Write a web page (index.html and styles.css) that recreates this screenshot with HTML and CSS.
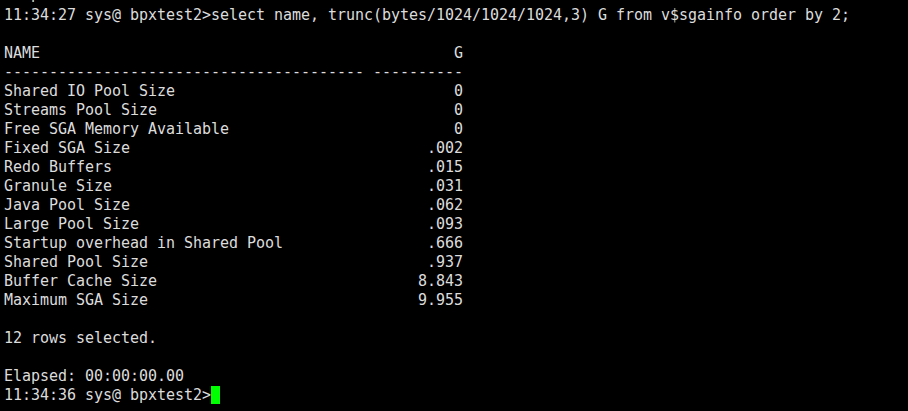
FILE: index.html
```html
<!DOCTYPE html>
<html>
<head>
<meta charset="utf-8">
<link rel="stylesheet" href="styles.css">
</head>
<body>
<div class="ghost"><pre class="ghost-line">Elapsed: 00:00:00.01</pre></div>
<pre class="term">11:34:27 sys@ bpxtest2>select name, trunc(bytes/1024/1024/1024,3) G from v$sgainfo order by 2;

NAME                                              G
---------------------------------------- ----------
Shared IO Pool Size                               0
Streams Pool Size                                 0
Free SGA Memory Available                         0
Fixed SGA Size                                 .002
Redo Buffers                                   .015
Granule Size                                   .031
Java Pool Size                                 .062
Large Pool Size                                .093
Startup overhead in Shared Pool                .666
Shared Pool Size                               .937
Buffer Cache Size                             8.843
Maximum SGA Size                              9.955

12 rows selected.

Elapsed: 00:00:00.00
11:34:36 sys@ bpxtest2><span class="cursor"></span></pre>
</body>
</html>
```
FILE: styles.css
```css
html, body {
  margin: 0;
  padding: 0;
  background: #000;
  height: 100%;
  overflow: hidden;
}
.ghost {
  height: 3px;
  overflow: hidden;
}
.ghost-line,
.term {
  padding: 0 0 0 4px;
  font-family: "DejaVu Sans Mono", monospace;
  font-size: 15px;
  line-height: 19px;
  color: #dcdcdc;
  letter-spacing: -0.03px;
  white-space: pre;
}
.ghost-line {
  margin: -15px 0 0 0;
}
.term {
  margin: 3px 0 0 0;
}
.cursor {
  display: inline-block;
  width: 9px;
  height: 18px;
  background: #00ff00;
  vertical-align: -4px;
}
```
